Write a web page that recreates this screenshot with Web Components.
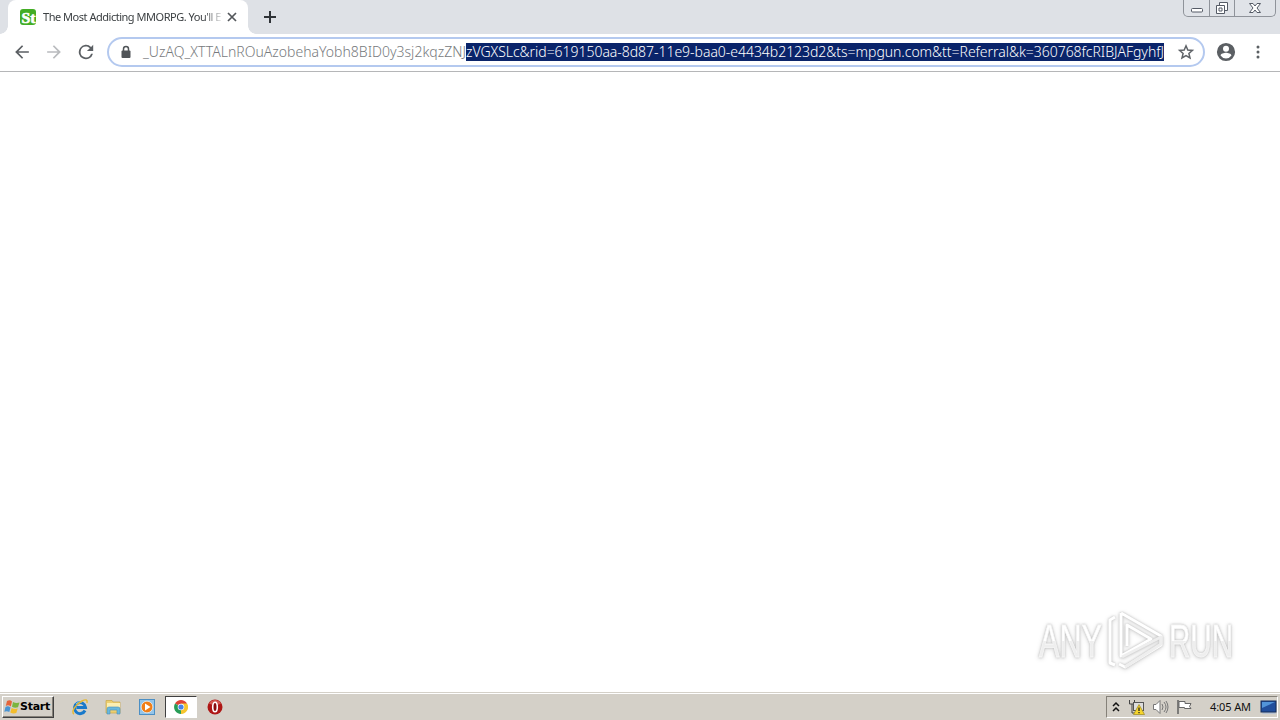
<!DOCTYPE html>
<html lang="en">
<head>
<meta charset="utf-8">
<title>Desktop</title>
<style>
	body {
		margin: 0;
		overflow: hidden;
		background: #fff;
	}
</style>
</head>
<body>
<desk-top></desk-top>

<script>
const define = (name, html, setup) => {
	const template = document.createElement('template')
	template.innerHTML = html

	window.customElements.define(name, class extends HTMLElement {
		constructor() {
			super()
			this.attachShadow({ mode: 'open' })
			this.shadowRoot.appendChild(template.content.cloneNode(true))
		}

		connectedCallback() {
			if (setup) setup(this)
		}
	})
}

// One line of text, tracked so that it fills the width given in pixels
define('fit-text', `
	<style>
		:host { display: block; flex: none; }
		span { display: inline-block; vertical-align: top; white-space: pre; }
	</style>
	<span></span>
`, host => {
	const span = host.shadowRoot.querySelector('span')
	const width = Number(host.getAttribute('width'))

	host.style.width = width + 'px'
	span.textContent = host.getAttribute('text')
	span.style.letterSpacing = (width - span.getBoundingClientRect().width) / span.textContent.length + 'px'
})

define('window-controls', `
	<style>
		:host {
			display: grid;
			grid-template-columns: 25px 25px 41px;
			box-sizing: border-box;
			width: 93px;
			height: 17px;
			margin-right: 4px;
			border: 1px solid #8f939a;
			border-top: 0;
			border-radius: 0 0 5px 5px;
			background: #e0e3e8;
		}
		div { display: flex; justify-content: center; }
		div + div { border-left: 1px solid #8f939a; }
		svg { fill: #fff; stroke: #555b66; }
	</style>
	<div><svg width="14" height="16"><rect x="1.5" y="8.5" width="11" height="3.5" rx="1" /></svg></div>
	<div><svg width="14" height="16"><path d="M4.5 2.5h8v8h-8z" /><path d="M1.5 5.500h8v8h-8z" /><path d="M4 8h3v3H4z" /></svg></div>
	<div><svg width="14" height="16"><path d="M1.500 3.500H5l2 2.500 2-2.500h3.500L9 8l3.500 4.500H9L7 10l-2 2.500H1.500L5 8z" /></svg></div>
`)

define('tab-strip', `
	<style>
		:host {
			display: flex;
			align-items: flex-start;
			height: 34px;
			padding-left: 8px;
			background: #dee1e6;
		}
		.tab {
			position: relative;
			display: flex;
			align-items: center;
			box-sizing: border-box;
			width: 240px;
			height: 34px;
			padding-left: 12px;
			border-radius: 8px 8px 0 0;
			background: #fff;
			color: #3c4043;
			font: 11px/16px "Noto Sans", sans-serif;
		}
		.tab::before,
		.tab::after {
			content: "";
			position: absolute;
			bottom: 0;
			width: 8px;
			height: 8px;
		}
		.tab::before { left: -8px; background: radial-gradient(circle at 0 0, transparent 7.5px, #fff 8px); }
		.tab::after { right: -8px; background: radial-gradient(circle at 100% 0, transparent 7.5px, #fff 8px); }
		.title {
			width: 178px;
			margin-left: 7px;
			-webkit-mask-image: linear-gradient(90deg, #000 160px, transparent 182px);
		}
		.close { margin-left: 4px; }
		.new { margin: 10px 0 0 15px; }
		window-controls { margin-left: auto; }
	</style>
	<div class="tab">
		<svg width="16" height="16" viewBox="0 0 16 16">
			<rect width="16" height="16" rx="3" fill="#43ad25" />
			<text x="1.500" y="13.500" textLength="14" lengthAdjust="spacingAndGlyphs" fill="#fff" font-family="Liberation Serif" font-size="15" font-weight="bold" stroke="#fff" stroke-width=".6">St</text>
		</svg>
		<div class="title"><fit-text text="The Most Addicting MMORPG. You'll E" width="178"></fit-text></div>
		<svg class="close" width="14" height="14"><path d="M3 3l8 8M11 3l-8 8" stroke="#53575b" stroke-width="1.700" /></svg>
	</div>
	<svg class="new" width="14" height="14"><path d="M7 1v12M1 7h12" stroke="#2f3337" stroke-width="2" /></svg>
	<window-controls></window-controls>
`)

define('address-bar', `
	<style>
		:host {
			display: flex;
			align-items: center;
			box-sizing: border-box;
			width: 1098px;
			height: 30px;
			padding-left: 11px;
			border: 2px solid #b4c9ef;
			border-radius: 15px;
			background: #fff;
			color: #777a7d;
			font: 300 14px/18px "Noto Sans", sans-serif;
		}
		.lock { margin-right: 11px; }
		.selected { background: #0a246a; color: #fff; }
		.star { margin-left: 13px; }
	</style>
	<svg class="lock" width="12" height="14" viewBox="0 0 12 14"><path d="M3.500 6V4a2.500 2.500 0 0 1 5 0v2" fill="none" stroke="#505458" stroke-width="1.500" /><rect x="1.500" y="5.500" width="9" height="7.500" rx="1" fill="#505458" /></svg>
	<fit-text text="_UzAQ_XTTALnROuAzobehaYobh8BID0y3sj2kqzZNJ" width="323"></fit-text>
	<fit-text class="selected" text="zVGXSLc&amp;rid=619150aa-8d87-11e9-baa0-e4434b2123d2&amp;ts=mpgun.com&amp;tt=Referral&amp;k=360768fcRIBJAFgyhfJ" width="698"></fit-text>
	<svg class="star" width="18" height="18" viewBox="0 0 18 18"><path d="M9 2.800l1.800 4.200 4.600.4-3.500 3 1.100 4.500L9 12.500l-4 2.400 1.100-4.500-3.500-3 4.600-.4z" fill="none" stroke="#5f6368" stroke-width="1.500" /></svg>
`)

define('tool-bar', `
	<style>
		:host {
			display: flex;
			align-items: center;
			box-sizing: border-box;
			height: 38px;
			padding: 0 13px 1px;
			border-bottom: 1px solid #b5b6b8;
			background: #fff;
		}
		svg { flex: none; fill: #5b5f63; }
		.forward { margin-left: 14px; fill: #b9bbbe; }
		.reload { margin-left: 14px; }
		address-bar { margin-left: 12px; }
		.profile { margin-left: 11px; }
		.menu { margin-left: 13px; }
	</style>
	<svg width="18" height="18" viewBox="1.500 1.500 21 21"><path d="M20 11H7.800l5.600-5.600L12 4l-8 8 8 8 1.400-1.400L7.800 13H20z" /></svg>
	<svg class="forward" width="18" height="18" viewBox="1.500 1.500 21 21"><path d="M12 4l-1.400 1.400 5.600 5.600H4v2h12.200l-5.600 5.600L12 20l8-8z" /></svg>
	<svg class="reload" width="18" height="18" viewBox="2 2 20 20"><path d="M17.650 6.350A8 8 0 1 0 19.730 14h-2.080A6 6 0 1 1 12 6c1.660 0 3.140.69 4.220 1.780L13 11h7V4z" /></svg>
	<address-bar></address-bar>
	<svg class="profile" width="20" height="20" viewBox="1 1 22 22"><path d="M12 2a10 10 0 1 0 0 20 10 10 0 0 0 0-20zm0 3a3.300 3.300 0 1 1 0 6.600A3.300 3.300 0 0 1 12 5zm0 14.200a7.200 7.200 0 0 1-6-3.220c.03-1.990 4-3.080 6-3.080s5.970 1.090 6 3.080a7.200 7.200 0 0 1-6 3.220z" /></svg>
	<svg class="menu" width="18" height="18"><circle cx="9" cy="4" r="1.500" /><circle cx="9" cy="9" r="1.500" /><circle cx="9" cy="14" r="1.500" /></svg>
`)

define('any-run', `
	<style>
		:host {
			display: flex;
			align-items: center;
			gap: 4px;
			font: 46px "Liberation Sans", sans-serif;
			filter: drop-shadow(0 0 1px #bbb) drop-shadow(0 1px 2px #ddd);
		}
		svg { overflow: visible; }
		text { stroke: #f8f8f8; stroke-width: .8; }
	</style>
	<svg width="66" height="60">
		<linearGradient id="word" x2="0" y2="1"><stop offset=".5" stop-color="#fff" /><stop offset=".5" stop-color="#eee" /></linearGradient>
		<text x="2" y="46" textLength="63" lengthAdjust="spacingAndGlyphs" fill="url(#word)">ANY</text>
	</svg>
	<svg width="58" height="62" fill="none" stroke-linejoin="round">
		<path d="M8 7L3 10V53L8 55M14 3L54 26V35L18 57L12 54M14 3V46L44 29L20 15V36" stroke="#fff" stroke-width="3" />
		<path d="M15 47L54 27V34L18 57" stroke="#eee" stroke-width="3" />
	</svg>
	<svg width="66" height="60"><text x="0" y="46" textLength="64" lengthAdjust="spacingAndGlyphs" fill="url(#word)">RUN</text></svg>
`)

define('system-tray', `
	<style>
		:host {
			display: flex;
			align-items: center;
			box-sizing: border-box;
			width: 172px;
			height: 22px;
			margin-left: auto;
			padding-left: 5px;
			border: 1px solid;
			border-color: #858179 #fff #fff #858179;
			color: #111;
			font: 11px/16px "Noto Sans", sans-serif;
		}
		svg { flex: none; }
		.network { margin-left: 8px; }
		.sound { margin-left: 7px; }
		.flag { margin-left: 7px; }
		fit-text { margin-left: 17px; }
		.screen { margin-left: 9px; }
	</style>
	<svg width="8" height="12" fill="none" stroke="#111" stroke-width="1.500"><path d="M1 5l3-3 3 3M1 10l3-3 3 3" /></svg>
	<svg class="network" width="17" height="16">
		<path d="M1.500 1v4h5V1M4 5v9h4" fill="none" stroke="#444" />
		<rect x="5.500" y="3.500" width="10" height="8" fill="#ddd" stroke="#555" />
		<path d="M11 5.500l5.500 10h-11z" fill="#f6d52d" stroke="#9b861f" stroke-width=".7" />
		<path d="M11 8.500v3.500M11 13v1.200" stroke="#222" stroke-width="1.300" />
	</svg>
	<svg class="sound" width="17" height="16" fill="none" stroke="#777">
		<path d="M1.500 5.500H4l4-4v13l-4-4H1.500z" fill="#fff" />
		<path d="M10 5q2 3 0 6M12 3q4 5 0 10M14 2q4 6 0 12" />
	</svg>
	<svg class="flag" width="17" height="16" fill="#fff" stroke="#666"><path d="M2 1v14" stroke-width="1.600" /><path d="M3 2.500h6v2h6l-1.500 3 1.500 2H8.500v-1H3z" /></svg>
	<fit-text text="4:05 AM" width="41"></fit-text>
	<svg class="screen" width="17" height="16"><path d="M3 13h12l1 2H2z" fill="#b9c4d3" /><rect x="1" y="2" width="15" height="11" fill="#214e9c" stroke="#152c5a" /><path d="M2 3h13L2 9z" fill="#5294d9" /></svg>
`)

define('task-bar', `
	<style>
		:host {
			display: flex;
			align-items: center;
			box-sizing: border-box;
			height: 28px;
			padding: 1px 2px 0;
			border-top: 1px solid #d4d0c8;
			background: #d4d0c8;
			box-shadow: inset 0 1px #fff;
		}
		.start {
			display: flex;
			align-items: center;
			box-sizing: border-box;
			width: 52px;
			height: 22px;
			border: 1px solid;
			border-color: #fff #404040 #404040 #fff;
			box-shadow: inset -1px -1px #858179;
			color: #000;
			font: bold 11px/16px "DejaVu Sans", sans-serif;
		}
		.start svg { margin-left: 1px; }
		.apps { display: flex; align-items: center; margin-left: 17px; }
		.apps svg { display: block; }
		.folder { margin-left: 16px; }
		.media { margin-left: 17px; }
		.active {
			display: flex;
			align-items: center;
			justify-content: center;
			box-sizing: border-box;
			width: 32px;
			height: 22px;
			margin: 0 10px;
			border: 1px solid;
			border-color: #404040 #fff #fff #404040;
			background: #fff;
		}
	</style>
	<div class="start">
		<svg width="16" height="16" viewBox="0 0 16 16">
			<path d="M3 2q3-1.500 5 .5L6.800 7.500q-2.500-2-5-.5z" fill="#e5643a" />
			<path d="M9 3q3 1.500 6.500.5L14 8.300q-3 1.200-6-.5z" fill="#7bb540" />
			<path d="M1.500 8q2.500-1.500 5 .5L5.300 13Q3 11.500.3 12.700z" fill="#4a94d2" />
			<path d="M7.700 9q3 1.500 6 .5L12.300 14q-3 1.200-6-.5z" fill="#f3bd2c" />
		</svg>
		<fit-text text="Start" width="30"></fit-text>
	</div>
	<div class="apps">
		<svg width="18" height="18" viewBox="0 0 18 18" fill="none">
			<path d="M14 12.500A5.500 5.500 0 1 1 14.500 9.500H5.500" stroke="#1979ca" stroke-width="3" />
			<path d="M5 6q2-3 6-2" stroke="#7cc8f2" stroke-width="1" />
			<path d="M3 16C-.5 14 5 6 11 3q6-3 5 2" stroke="#e5b936" stroke-width="1.500" />
		</svg>
		<svg class="folder" width="17" height="18" viewBox="0 0 17 18">
			<path d="M1 4V2.500h6L8 4h7v11H1z" fill="#edcf70" stroke="#c9a747" stroke-width=".7" />
			<path d="M2 5h13v5H2z" fill="#fbefb2" />
			<path d="M2 16v-5q0-2 2-2h9q2 0 2 2v5h-3v-4H5v4z" fill="#69b9dd" stroke="#4c8fb9" stroke-width=".6" />
		</svg>
		<svg class="media" width="16" height="16">
			<rect x=".5" y=".5" width="15" height="15" fill="#94c5e9" stroke="#4c8fc4" />
			<circle cx="8" cy="8" r="5.800" fill="#f07e17" stroke="#fff" stroke-width=".6" />
			<path d="M6 4.500L11.500 8 6 11.500z" fill="#fff" />
		</svg>
		<div class="active">
			<svg width="14" height="14" viewBox="0 0 14 14">
				<path d="M7 7L1 3.500A7 7 0 0 1 13 3.500z" fill="#df4336" />
				<path d="M7 7L13.100 3.500A7 7 0 0 1 7 14z" fill="#f6c52e" />
				<path d="M7 7V14A7 7 0 0 1 1 3.500z" fill="#289d57" />
				<path d="M7 3.500h6L10 8.500 7 14l2-5z" fill="#f6c52e" />
				<circle cx="7" cy="7" r="3.300" fill="#fff" /><circle cx="7" cy="7" r="2.600" fill="#4782e8" />
			</svg>
		</div>
		<svg width="16" height="16"><circle cx="8" cy="8" r="7.500" fill="#ae1615" /><path d="M2 4.500a7 7 0 0 1 12 0Q8 8 2 4.500" fill="#d45850" /><ellipse cx="8" cy="8" rx="2.300" ry="4.800" fill="#8b0d0e" stroke="#fff" stroke-width="1.600" /></svg>
	</div>
	<system-tray></system-tray>
`)

define('desk-top', `
	<style>
		:host {
			display: grid;
			grid-template-rows: 34px 38px 1fr 28px;
			width: 1280px;
			height: 720px;
		}
		main {
			display: flex;
			align-items: flex-end;
			justify-content: flex-end;
			padding: 0 45px 20px 0;
			background: #fff;
		}
	</style>
	<tab-strip></tab-strip>
	<tool-bar></tool-bar>
	<main><any-run></any-run></main>
	<task-bar></task-bar>
`)
</script>
</body>
</html>
